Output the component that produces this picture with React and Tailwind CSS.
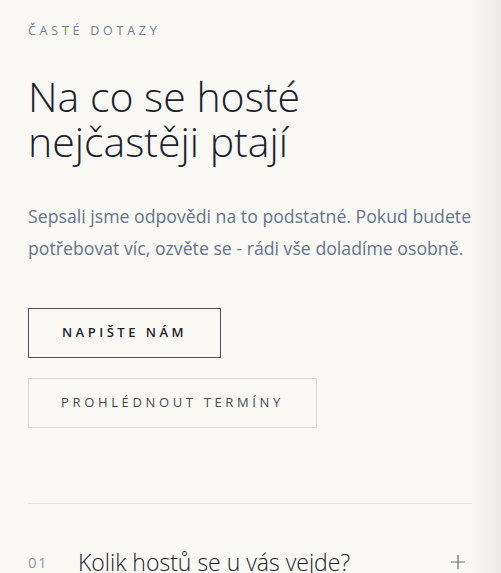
export default function App() {
  return (
    <div className="min-h-[573px] w-full bg-[linear-gradient(to_right,#f9f8f5_94%,#ebeae6)] font-['Open_Sans','Noto_Sans',sans-serif]">
      <section className="pl-7 pr-[29px] pt-[22px]">
        <p className="text-[12.5px] leading-[18px] tracking-[0.3em] text-[#6f7c93]">ČASTÉ DOTAZY</p>

        <h2 className="mt-[34px] text-[41px] leading-[45px] font-light text-[#1c2230]">
          Na co se hosté
          <br />
          nejčastěji ptají
        </h2>

        <p className="mt-[36px] text-[17.7px] leading-[32px] text-[#66748c]">
          Sepsali jsme odpovědi na to podstatné. Pokud budete potřebovat víc, ozvěte se - rádi vše doladíme osobně.
        </p>

        <div className="mt-[44px] flex flex-col items-start gap-5">
          <button className="h-[50px] w-[193px] border border-[#4b4f58] text-[13px] font-semibold tracking-[0.27em] text-[#1c2230]">
            NAPIŠTE NÁM
          </button>
          <button className="h-[50px] w-[289px] border border-[#dcd9d4] text-[13px] tracking-[0.28em] text-[#474b55]">
            PROHLÉDNOUT TERMÍNY
          </button>
        </div>

        <div className="mt-[75px] h-px w-full bg-[#e4e2de]" />

        <div className="mt-[41px] flex items-center">
          <span className="w-[50px] text-[15px] font-medium tracking-[0.1em] text-[#969aa3]">01</span>
          <span className="flex-1 text-[23px] font-light text-[#1c2230]">Kolik hostů se u vás vejde?</span>
          <svg width="16" height="16" viewBox="0 0 16 16" className="mr-[6px] text-[#6b6f78]">
            <path d="M8 1v14M1 8h14" stroke="currentColor" strokeWidth="1.2" />
          </svg>
        </div>
      </section>
    </div>
  );
}
